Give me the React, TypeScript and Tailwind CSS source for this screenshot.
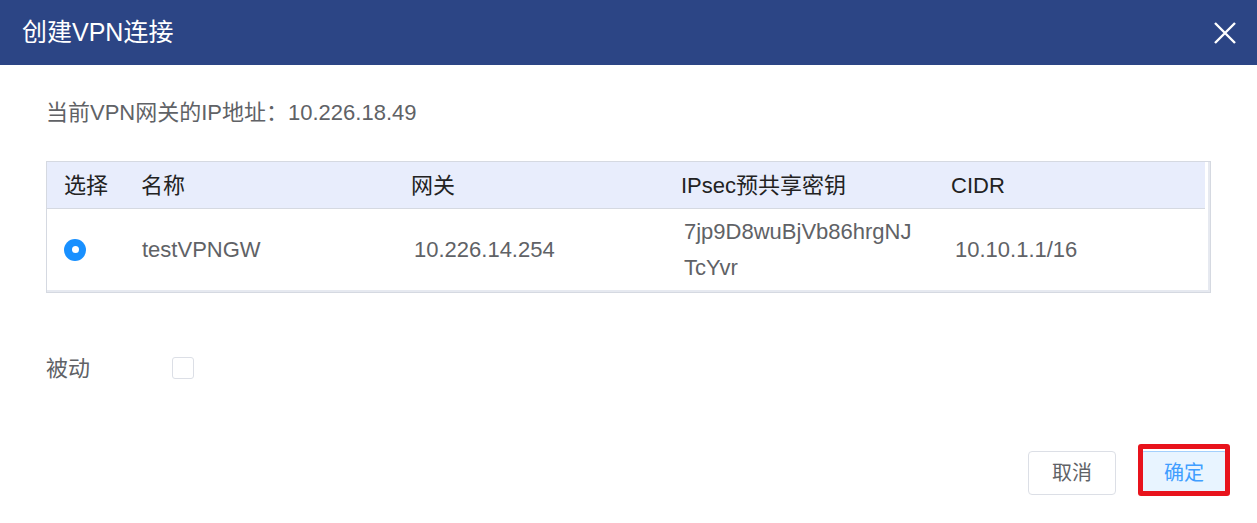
import React from "react";

export default function App() {
  const font = { fontFamily: '"Liberation Sans", "Noto Sans CJK SC", Arial, sans-serif' };
  return (
    <div className="w-[1257px] h-[523px] bg-white overflow-hidden" style={font}>
      <div className="h-[65px] bg-[#2c4585] flex items-center justify-between pl-[22px] pr-[20px]">
        <span className="text-[25px] text-white leading-none">创建VPN连接</span>
        <svg width="24" height="24" viewBox="0 0 24 24" className="text-white">
          <path d="M2 2 L22 22 M22 2 L2 22" stroke="currentColor" strokeWidth="2.4" fill="none" />
        </svg>
      </div>
      <div className="px-[46px]">
        <div className="mt-[33px] text-[22px] leading-[30px] text-[#606266]">当前VPN网关的IP地址：10.226.18.49</div>
        <div className="mt-[33px] w-[1165px] border border-[#d5d9e1]">
          <div className="border-r-2 border-b-2 border-[#e6e9f0] pr-[3px]">
            <div className="grid grid-cols-[77px_270px_270px_270px_1fr] h-[47px] bg-[#e8edfc] border-b border-[#d5d9e1] text-[22px] text-[#222] items-center">
              <div className="pl-[17px]">选择</div>
              <div className="pl-[17px]">名称</div>
              <div className="pl-[17px]">网关</div>
              <div className="pl-[17px]">IPsec预共享密钥</div>
              <div className="pl-[17px]">CIDR</div>
            </div>
            <div className="grid grid-cols-[77px_270px_270px_270px_1fr] h-[81px] text-[22px] text-[#606266] items-center">
              <div className="pl-[17px]">
                <div className="w-[22px] h-[22px] rounded-full bg-[#1890ff] flex items-center justify-center">
                  <div className="w-[7px] h-[7px] rounded-full bg-white" />
                </div>
              </div>
              <div className="pl-[18px]">testVPNGW</div>
              <div className="pl-[20px]">10.226.14.254</div>
              <div className="pl-[20px] leading-[36px]">
                <div>7jp9D8wuBjVb86hrgNJ</div>
                <div>TcYvr</div>
              </div>
              <div className="pl-[21px]">10.10.1.1/16</div>
            </div>
          </div>
        </div>
        <div className="mt-[60px] flex items-center h-[30px]">
          <span className="w-[126px] text-[22px] text-[#606266]">被动</span>
          <div className="w-[22px] h-[22px] rounded-[3px] border border-[#dcdfe6] bg-white" />
        </div>
      </div>
      <div className="mt-[68px] flex justify-end pr-[29px] gap-[24px]">
        <button className="w-[88px] h-[44px] rounded-[4px] border border-[#dcdfe6] bg-white text-[20px] text-[#606266]">取消</button>
        <div className="relative">
          <button className="w-[88px] h-[44px] rounded-[4px] border border-[#a3d0fd] bg-[#e8f4ff] text-[20px] text-[#409eff]">确定</button>
          <div className="absolute left-[-2px] right-[-2px] top-[-7px] bottom-[-1px] border-[5px] border-[#e8131c] rounded-[3px]" />
        </div>
      </div>
    </div>
  );
}
